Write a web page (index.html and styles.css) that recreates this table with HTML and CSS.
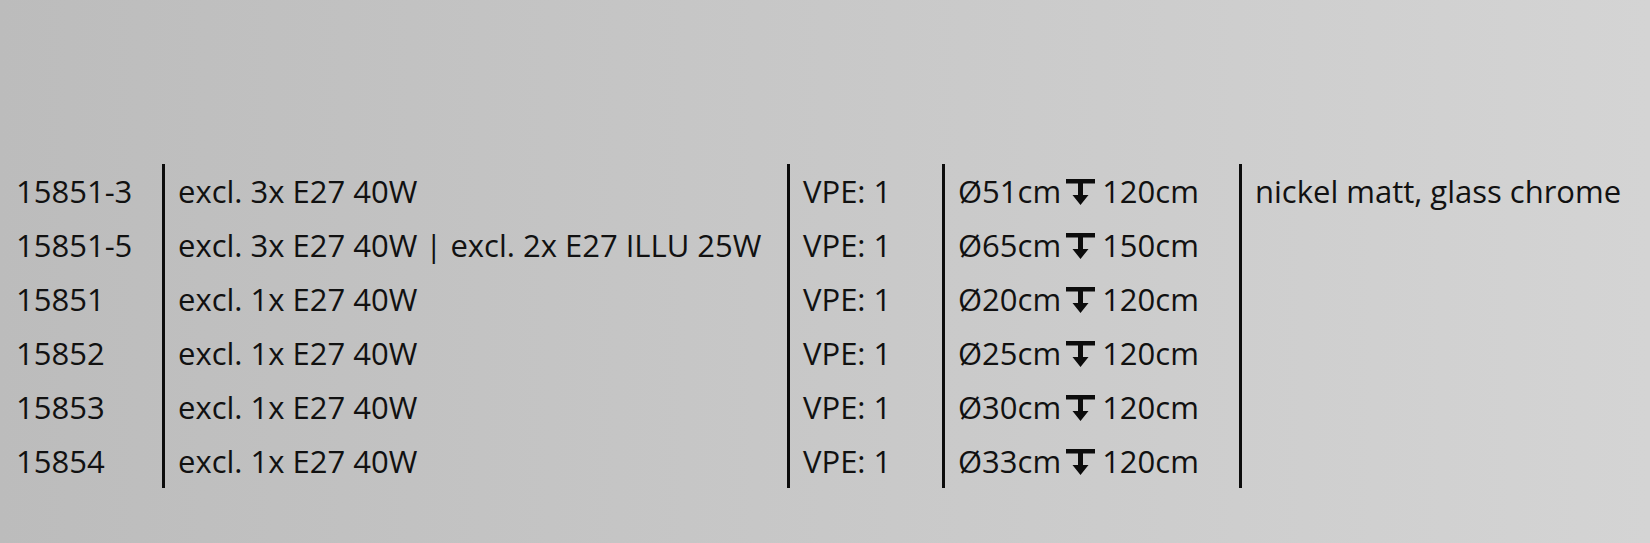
FILE: index.html
```html
<!DOCTYPE html>
<html lang="de">
<head>
    <meta charset="UTF-8">
    <meta name="viewport" content="width=device-width, initial-scale=1.0">
    <title>15851 Serie</title>
    <link rel="stylesheet" href="styles.css">
</head>
<body>
    <div class="table">
        <div class="col col-code">
            <div class="cell">15851-3</div>
            <div class="cell">15851-5</div>
            <div class="cell">15851</div>
            <div class="cell">15852</div>
            <div class="cell">15853</div>
            <div class="cell">15854</div>
        </div>
        <div class="col col-bulb">
            <div class="cell">excl. 3x E27 40W</div>
            <div class="cell">excl. 3x E27 40W | excl. 2x E27 ILLU 25W</div>
            <div class="cell">excl. 1x E27 40W</div>
            <div class="cell">excl. 1x E27 40W</div>
            <div class="cell">excl. 1x E27 40W</div>
            <div class="cell">excl. 1x E27 40W</div>
        </div>
        <div class="col col-vpe">
            <div class="cell">VPE: 1</div>
            <div class="cell">VPE: 1</div>
            <div class="cell">VPE: 1</div>
            <div class="cell">VPE: 1</div>
            <div class="cell">VPE: 1</div>
            <div class="cell">VPE: 1</div>
        </div>
        <div class="col col-size">
            <div class="cell">Ø51cm<svg class="drop" viewBox="0 0 29 28"><path d="M0 0h29v4.5H0zM12 4h5v12h-5zM6.5 16h16l-8 10z"/></svg>120cm</div>
            <div class="cell">Ø65cm<svg class="drop" viewBox="0 0 29 28"><path d="M0 0h29v4.5H0zM12 4h5v12h-5zM6.5 16h16l-8 10z"/></svg>150cm</div>
            <div class="cell">Ø20cm<svg class="drop" viewBox="0 0 29 28"><path d="M0 0h29v4.5H0zM12 4h5v12h-5zM6.5 16h16l-8 10z"/></svg>120cm</div>
            <div class="cell">Ø25cm<svg class="drop" viewBox="0 0 29 28"><path d="M0 0h29v4.5H0zM12 4h5v12h-5zM6.5 16h16l-8 10z"/></svg>120cm</div>
            <div class="cell">Ø30cm<svg class="drop" viewBox="0 0 29 28"><path d="M0 0h29v4.5H0zM12 4h5v12h-5zM6.5 16h16l-8 10z"/></svg>120cm</div>
            <div class="cell">Ø33cm<svg class="drop" viewBox="0 0 29 28"><path d="M0 0h29v4.5H0zM12 4h5v12h-5zM6.5 16h16l-8 10z"/></svg>120cm</div>
        </div>
        <div class="col col-finish">
            <div class="cell">nickel matt, glass chrome</div>
        </div>
    </div>
</body>
</html>
```

FILE: styles.css
```css
html, body {
    height: 100%;
}
body {
    margin: 0;
    font-family: "Open Sans", sans-serif;
    font-size: 31px;
    color: #111;
    background: linear-gradient(to right, #bcbcbc, #d4d4d4);
}
.table {
    display: flex;
    padding-top: 164px;
    padding-left: 16px;
}
.col {
    display: flex;
    flex-direction: column;
    height: 324px;
}
.col + .col {
    border-left: 3px solid #0c0c0c;
    padding-left: 13px;
}
.cell {
    height: 54px;
    line-height: 54px;
    white-space: nowrap;
}
.col-code {
    width: 146px;
}
.col-bulb {
    width: 609px;
}
.col-vpe {
    width: 139px;
}
.col-size {
    width: 281px;
}
.drop {
    width: 29px;
    height: 28px;
    margin: 0 7px 0 5px;
    vertical-align: -4px;
    fill: #0c0c0c;
}
```
